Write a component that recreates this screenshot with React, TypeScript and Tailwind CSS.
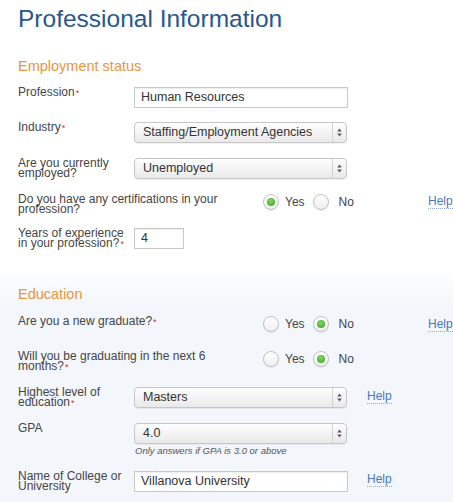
import type { ReactNode } from 'react'

function Req() {
  return <span className="ml-[1px] text-[9px] text-[#d2332e]">*</span>
}

function Label({ children, className = 'w-[116px]' }: { children: ReactNode; className?: string }) {
  return <div className={`shrink-0 text-[12px] leading-[10px] text-[#454545] ${className}`}>{children}</div>
}

function Help({ className = '' }: { className?: string }) {
  return (
    <span className={`border-b border-dotted border-[#8eaad4] text-[12px] leading-[13px] text-[#4a78b8] ${className}`}>
      Help
    </span>
  )
}

function TextBox({ value, className }: { value: string; className: string }) {
  return (
    <div
      className={`h-[21px] shrink-0 border border-[#c8c8c8] bg-white pl-[6px] text-[12.5px] leading-[19px] text-[#333] shadow-[inset_0_1px_1px_rgba(0,0,0,0.07)] ${className}`}
    >
      {value}
    </div>
  )
}

function Select({ value }: { value: string }) {
  return (
    <div className="flex h-[21px] w-[213px] shrink-0 rounded-[4px] border border-[#c6c6c6] bg-[linear-gradient(to_bottom,#fefefe,#e9e9e9)] shadow-[0_1px_1px_rgba(0,0,0,0.06)]">
      <div className="flex-1 pl-[8px] text-[12.5px] leading-[19px] text-[#333]">{value}</div>
      <div className="flex w-[14px] items-center justify-center border-l border-[#d2d2d2]">
        <svg width="5" height="9" viewBox="0 0 5 9">
          <path d="M2.5 0.5L4.8 3.6H0.2Z M2.5 8.5L0.2 5.4H4.8Z" fill="#5a5a5a" />
        </svg>
      </div>
    </div>
  )
}

function Radio({ checked, className = '' }: { checked: boolean; className?: string }) {
  return (
    <span
      className={`flex h-[16px] w-[16px] shrink-0 items-center justify-center rounded-full border border-[#c2c2c2] bg-[linear-gradient(to_bottom,#ffffff,#eeeeee)] shadow-[0_1px_1px_rgba(0,0,0,0.08)] ${className}`}
    >
      {checked ? (
        <span className="h-[8px] w-[8px] rounded-full bg-[radial-gradient(circle_at_45%_35%,#7fd85e,#3a9f22)]" />
      ) : null}
    </span>
  )
}

function YesNo({ yes }: { yes: boolean }) {
  return (
    <div className="ml-[20px] flex w-[165px] shrink-0 items-center text-[12px] leading-[16px] text-[#454545]">
      <Radio checked={yes} />
      <span className="ml-[6px]">Yes</span>
      <Radio checked={!yes} className="ml-[8px]" />
      <span className="ml-[10px]">No</span>
    </div>
  )
}

export default function App() {
  return (
    <div className="flex h-[502px] w-[453px] flex-col overflow-hidden bg-white font-['Liberation_Sans',Arial,sans-serif]">
      <div className="pl-[18px] pt-[4px]">
        <h1 className="h-[30px] text-[24.5px] leading-[30px] text-[#2a578b]">Professional Information</h1>
        <h2 className="mt-[24px] text-[14.5px] leading-[17px] text-[#e6963f]">Employment status</h2>

        <div className="mt-[12px] flex items-start">
          <Label>
            Profession<Req />
          </Label>
          <TextBox value="Human Resources" className="w-[214px]" />
        </div>

        <div className="mt-[14px] flex items-start">
          <Label>
            Industry<Req />
          </Label>
          <Select value="Staffing/Employment Agencies" />
        </div>

        <div className="mt-[15px] flex items-start">
          <Label>Are you currently employed?</Label>
          <Select value="Unemployed" />
        </div>

        <div className="mt-[15px] flex items-start">
          <Label className="w-[225px]">Do you have any certifications in your profession?</Label>
          <YesNo yes />
          <Help className="mt-[1px]" />
        </div>

        <div className="mt-[14px] flex items-start">
          <Label>
            Years of experience in your profession?<Req />
          </Label>
          <TextBox value="4" className="w-[50px]" />
        </div>
      </div>

      <div className="mt-[13px] flex-1 bg-[linear-gradient(to_bottom,#ffffff_8px,#f3f6fa_44px)] pl-[18px] pt-[24px]">
        <h2 className="text-[14.5px] leading-[17px] text-[#e6963f]">Education</h2>

        <div className="mt-[13px] flex items-start">
          <Label className="w-[225px]">
            Are you a new graduate?<Req />
          </Label>
          <YesNo yes={false} />
          <Help className="mt-[2px]" />
        </div>

        <div className="mt-[19px] flex items-start">
          <Label className="w-[225px]">
            Will you be graduating in the next 6 months?<Req />
          </Label>
          <YesNo yes={false} />
        </div>

        <div className="mt-[15px] flex items-start">
          <Label>
            Highest level of education<Req />
          </Label>
          <Select value="Masters" />
          <Help className="ml-[20px] mt-[3px]" />
        </div>

        <div className="mt-[15px] flex items-start">
          <Label>GPA</Label>
          <div>
            <Select value="4.0" />
            <p className="mt-[1px] pl-[1px] text-[9.5px] italic leading-[12px] text-[#555]">
              Only answers if GPA is 3.0 or above
            </p>
          </div>
        </div>

        <div className="mt-[14px] flex items-start">
          <Label>Name of College or University</Label>
          <TextBox value="Villanova University" className="w-[214px]" />
          <Help className="ml-[19px] mt-[2px]" />
        </div>
      </div>
    </div>
  )
}
